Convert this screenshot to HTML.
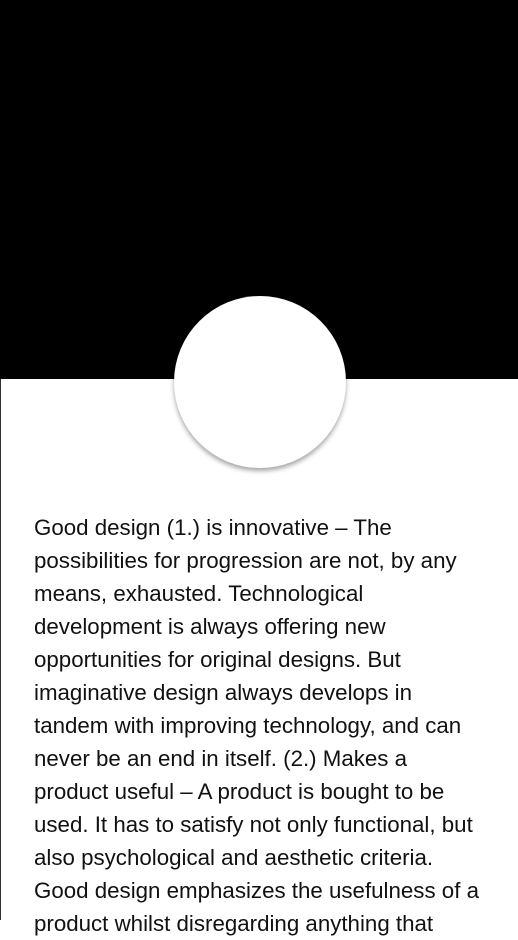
<!DOCTYPE html>
<html><head><meta charset="utf-8"><style>
html,body{margin:0;padding:0;width:518px;height:920px;overflow:hidden;background:#fff}
.top{position:absolute;left:0;top:0;width:518px;height:379px;background:#000}
.edge{position:absolute;left:0;top:379px;width:1px;height:541px;background:#333}
.circ{position:absolute;left:174px;top:296px;width:172px;height:172px;border-radius:50%;background:#fff;box-shadow:0 3px 5px rgba(0,0,0,0.35)}
.txt{position:absolute;left:34px;top:511px;font-family:"Liberation Sans",sans-serif;font-size:22.3px;line-height:33px;color:#111;letter-spacing:0}
.txt div{white-space:nowrap}
</style></head><body>
<div class="top"></div>
<div class="edge"></div>
<div class="circ"></div>
<div class="txt">
<div>Good design (1.) is innovative – The</div>
<div>possibilities for progression are not, by any</div>
<div>means, exhausted. Technological</div>
<div>development is always offering new</div>
<div>opportunities for original designs. But</div>
<div>imaginative design always develops in</div>
<div>tandem with improving technology, and can</div>
<div>never be an end in itself. (2.) Makes a</div>
<div>product useful – A product is bought to be</div>
<div>used. It has to satisfy not only functional, but</div>
<div>also psychological and aesthetic criteria.</div>
<div>Good design emphasizes the usefulness of a</div>
<div>product whilst disregarding anything that</div>
</div>
</body></html>
